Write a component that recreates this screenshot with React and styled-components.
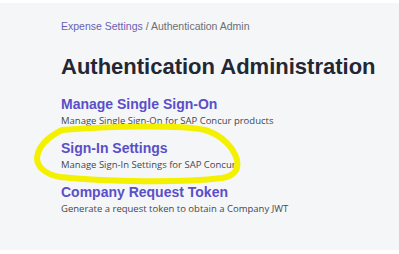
import styled, { createGlobalStyle } from "styled-components";

const GlobalStyle = createGlobalStyle`
    body {
        margin: 0;
        background: #ffffff;
        font-family: 'Liberation Sans', Arial, sans-serif;
    }
`;

const links = [
    { title: "Manage Single Sign-On", text: "Manage Single Sign-On for SAP Concur products" },
    { title: "Sign-In Settings", text: "Manage Sign-In Settings for SAP Concur" },
    { title: "Company Request Token", text: "Generate a request token to obtain a Company JWT" },
];

export default function App() {
    return (
        <>
            <GlobalStyle />
            <Page>
                <Breadcrumb>
                    <Crumb>Expense Settings</Crumb> / Authentication Admin
                </Breadcrumb>
                <Title>Authentication Administration</Title>
                <List>
                    {links.map((l) => (
                        <Item key={l.title}>
                            <ItemTitle>{l.title}</ItemTitle>
                            <ItemText>{l.text}</ItemText>
                        </Item>
                    ))}
                </List>
                <Highlight viewBox="0 0 399 254" width="399" height="254">
                    <path
                        d="M62 130 C110 126 180 125 205 130 C222 135 234 148 237 160 C239 170 234 176 222 178 C180 183 110 182 60 177 C44 174 37 166 37 158 C38 148 46 138 62 130"
                        fill="none"
                        stroke="#f3f000"
                        strokeWidth="6"
                        strokeLinecap="round"
                    />
                </Highlight>
            </Page>
        </>
    );
}

const Page = styled.div`
    position: relative;
    margin-top: 3px;
    height: 247px;
    box-sizing: border-box;
    background: #f5f6f8;
    padding: 17px 0 0 61px;
    overflow: hidden;
`;

const Breadcrumb = styled.div`
    font-size: 10.5px;
    color: #6b6e75;
    line-height: 13px;
`;

const Crumb = styled.span`
    color: #6a5fb3;
`;

const Title = styled.h1`
    margin: 21px 0 0;
    font-size: 22px;
    font-weight: bold;
    line-height: 26px;
    color: #232734;
`;

const List = styled.div`
    display: flex;
    flex-direction: column;
    gap: 12px;
    margin-top: 16px;
`;

const Item = styled.div`
    display: flex;
    flex-direction: column;
`;

const ItemTitle = styled.div`
    font-size: 14px;
    font-weight: bold;
    line-height: 17px;
    color: #5a4fc8;
`;

const ItemText = styled.div`
    font-family: 'Open Sans', 'Noto Sans', sans-serif;
    font-size: 9.5px;
    line-height: 15px;
    color: #45474d;
`;

const Highlight = styled.svg`
    position: absolute;
    left: 0;
    top: -3px;
    pointer-events: none;
`;
